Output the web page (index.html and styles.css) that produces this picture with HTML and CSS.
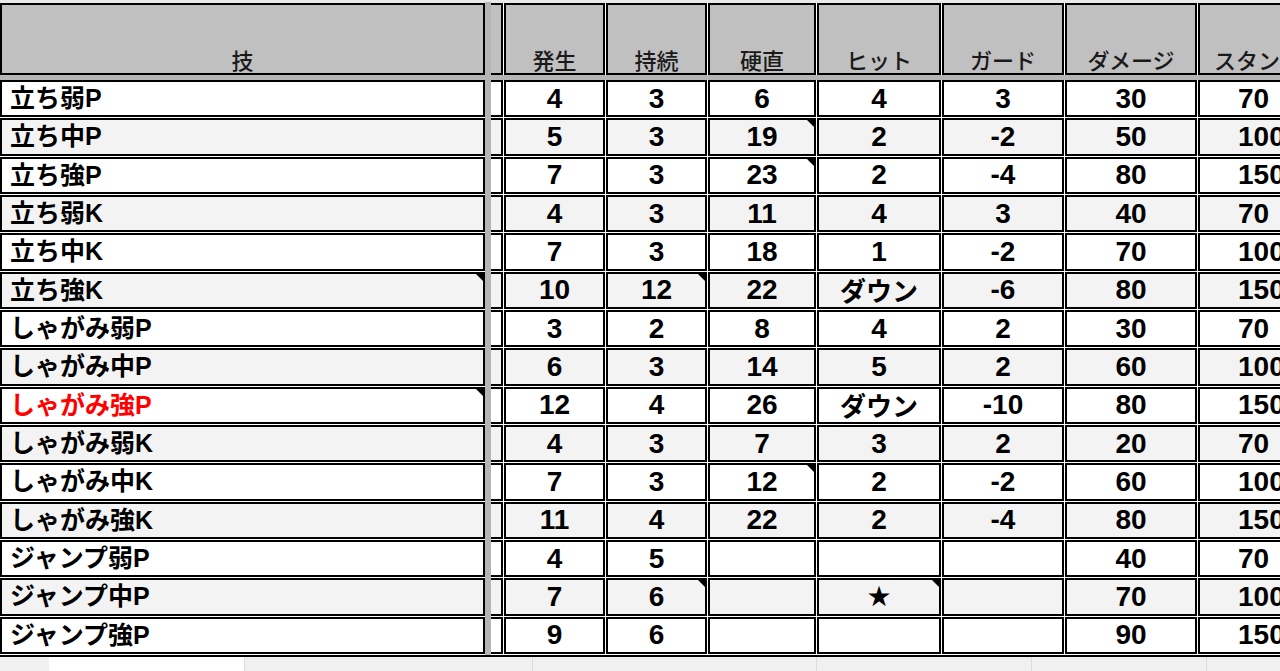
FILE: index.html
```html
<!DOCTYPE html>
<html lang="ja">
<head>
<meta charset="utf-8">
<title>技表</title>
<link rel="stylesheet" href="styles.css">
</head>
<body>
<div class="sheet">
  <div class="topstrip"></div>
  <div class="grid">
    <div class="c hd name">技</div>
    <div class="c hd colb"></div>
    <div class="c hd">発生</div>
    <div class="c hd">持続</div>
    <div class="c hd">硬直</div>
    <div class="c hd">ヒット</div>
    <div class="c hd">ガード</div>
    <div class="c hd">ダメージ</div>
    <div class="c hd stun">スタン</div>

    <div class="c name">立ち弱P</div><div class="c colb"></div><div class="c">4</div><div class="c">3</div><div class="c">6</div><div class="c">4</div><div class="c">3</div><div class="c">30</div><div class="c stun">70</div>
    <div class="c alt name">立ち中P</div><div class="c alt colb"></div><div class="c alt">5</div><div class="c alt">3</div><div class="c alt note">19</div><div class="c alt">2</div><div class="c alt">-2</div><div class="c alt">50</div><div class="c alt stun">100</div>
    <div class="c name">立ち強P</div><div class="c colb"></div><div class="c">7</div><div class="c">3</div><div class="c note">23</div><div class="c">2</div><div class="c">-4</div><div class="c">80</div><div class="c stun">150</div>
    <div class="c alt name">立ち弱K</div><div class="c alt colb"></div><div class="c alt">4</div><div class="c alt">3</div><div class="c alt">11</div><div class="c alt">4</div><div class="c alt">3</div><div class="c alt">40</div><div class="c alt stun">70</div>
    <div class="c name">立ち中K</div><div class="c colb"></div><div class="c">7</div><div class="c">3</div><div class="c">18</div><div class="c">1</div><div class="c">-2</div><div class="c">70</div><div class="c stun">100</div>
    <div class="c alt name note">立ち強K</div><div class="c alt colb"></div><div class="c alt">10</div><div class="c alt note">12</div><div class="c alt">22</div><div class="c alt jp">ダウン</div><div class="c alt">-6</div><div class="c alt">80</div><div class="c alt stun">150</div>
    <div class="c name">しゃがみ弱P</div><div class="c colb"></div><div class="c">3</div><div class="c">2</div><div class="c">8</div><div class="c">4</div><div class="c">2</div><div class="c">30</div><div class="c stun">70</div>
    <div class="c alt name">しゃがみ中P</div><div class="c alt colb"></div><div class="c alt">6</div><div class="c alt">3</div><div class="c alt">14</div><div class="c alt">5</div><div class="c alt">2</div><div class="c alt">60</div><div class="c alt stun">100</div>
    <div class="c name note red">しゃがみ強P</div><div class="c colb"></div><div class="c">12</div><div class="c">4</div><div class="c">26</div><div class="c jp">ダウン</div><div class="c">-10</div><div class="c">80</div><div class="c stun">150</div>
    <div class="c alt name">しゃがみ弱K</div><div class="c alt colb"></div><div class="c alt">4</div><div class="c alt">3</div><div class="c alt">7</div><div class="c alt">3</div><div class="c alt">2</div><div class="c alt">20</div><div class="c alt stun">70</div>
    <div class="c name">しゃがみ中K</div><div class="c colb"></div><div class="c">7</div><div class="c">3</div><div class="c note">12</div><div class="c">2</div><div class="c">-2</div><div class="c">60</div><div class="c stun">100</div>
    <div class="c alt name">しゃがみ強K</div><div class="c alt colb"></div><div class="c alt">11</div><div class="c alt">4</div><div class="c alt">22</div><div class="c alt">2</div><div class="c alt">-4</div><div class="c alt">80</div><div class="c alt stun">150</div>
    <div class="c name">ジャンプ弱P</div><div class="c colb"></div><div class="c">4</div><div class="c">5</div><div class="c"></div><div class="c"></div><div class="c"></div><div class="c">40</div><div class="c stun">70</div>
    <div class="c alt name">ジャンプ中P</div><div class="c alt colb"></div><div class="c alt">7</div><div class="c alt note">6</div><div class="c alt"></div><div class="c alt note star">★</div><div class="c alt"></div><div class="c alt">70</div><div class="c alt stun">100</div>
    <div class="c name">ジャンプ強P</div><div class="c colb"></div><div class="c">9</div><div class="c">6</div><div class="c"></div><div class="c"></div><div class="c"></div><div class="c">90</div><div class="c stun">150</div>

    <div class="frz-row"></div>
    <div class="frz-col"></div>
  </div>
  <div class="tabbar">
    <div class="seg s1"></div>
    <div class="seg tab"></div>
    <div class="seg s3"></div>
    <div class="seg s4"></div>
    <div class="seg s5"></div>
    <div class="seg s6"></div>
    <div class="seg s7"></div>
  </div>
</div>
</body>
</html>
```
FILE: styles.css
```css
html, body {
  margin: 0;
  padding: 0;
  overflow: hidden;
  background: #ebebeb;
}
body {
  width: 1280px;
  height: 671px;
}
.sheet {
  width: 1340px;
}
.topstrip {
  height: 3px;
  background: #e9e9e9;
}
.grid {
  display: grid;
  grid-template-columns: 485px 4px 12px 101px 101px 108px 124px 122px 132px 138px;
  grid-template-rows: 72px 3px repeat(15, 37.33px);
  gap: 1px;
  background: #fff;
  padding-bottom: 1px;
  width: max-content;
}
.c {
  box-sizing: border-box;
  border: 2px solid #000;
  background: #fff;
  display: flex;
  align-items: center;
  justify-content: center;
  position: relative;
  font-family: "Liberation Sans", "Noto Sans CJK JP", sans-serif;
  font-weight: 700;
  font-size: 28px;
  line-height: 1;
  color: #000;
  overflow: hidden;
  white-space: nowrap;
}
.c.alt {
  background: #f3f3f3;
}
.c.hd {
  background: #c0c0c0;
  align-items: flex-end;
  padding-bottom: 3px;
  font-family: "Noto Sans CJK JP", sans-serif;
  font-weight: 500;
  font-size: 22px;
  color: #1a1a1a;
}
.c.name {
  justify-content: flex-start;
  padding-left: 8px;
  font-size: 25px;
}
.c.hd.name {
  justify-content: center;
  padding-left: 0;
  font-size: 22px;
}
.c.colb {
  border-left: 0;
}
.c.stun {
  justify-content: flex-start;
  padding-left: 38px;
}
.c.hd.stun {
  padding-left: 14px;
}
.c.jp {
  font-family: "Noto Sans CJK JP", sans-serif;
  font-size: 26px;
}
.c.star {
  font-family: "DejaVu Sans", sans-serif;
  font-size: 28px;
  font-weight: 400;
}
.c.red {
  color: #ff0000;
}
.note::after {
  content: "";
  position: absolute;
  top: 0;
  right: 0;
  width: 0;
  height: 0;
  border-style: solid;
  border-width: 0 7px 7px 0;
  border-color: transparent #000 transparent transparent;
}
.frz-row {
  grid-row: 2;
  grid-column: 1 / -1;
  margin: -1px 0;
  background: #b5b5b5;
}
.frz-col {
  grid-column: 2;
  grid-row: 1 / -1;
  margin: -1px -1px;
  background: #b5b5b5;
}
.tabbar {
  display: flex;
  height: 14px;
  border-top: 2px solid #000;
  background: #f0f0f0;
}
.seg {
  box-sizing: border-box;
  border-right: 1px solid #dcdcdc;
  height: 100%;
}
.s1 { width: 49px; border-right: 0; }
.tab { width: 196px; background: #fff; }
.s3 { width: 288px; }
.s4 { width: 284px; }
.s5 { width: 215px; }
.s6 { width: 175px; }
.s7 { width: 133px; border-right: 0; }
```
